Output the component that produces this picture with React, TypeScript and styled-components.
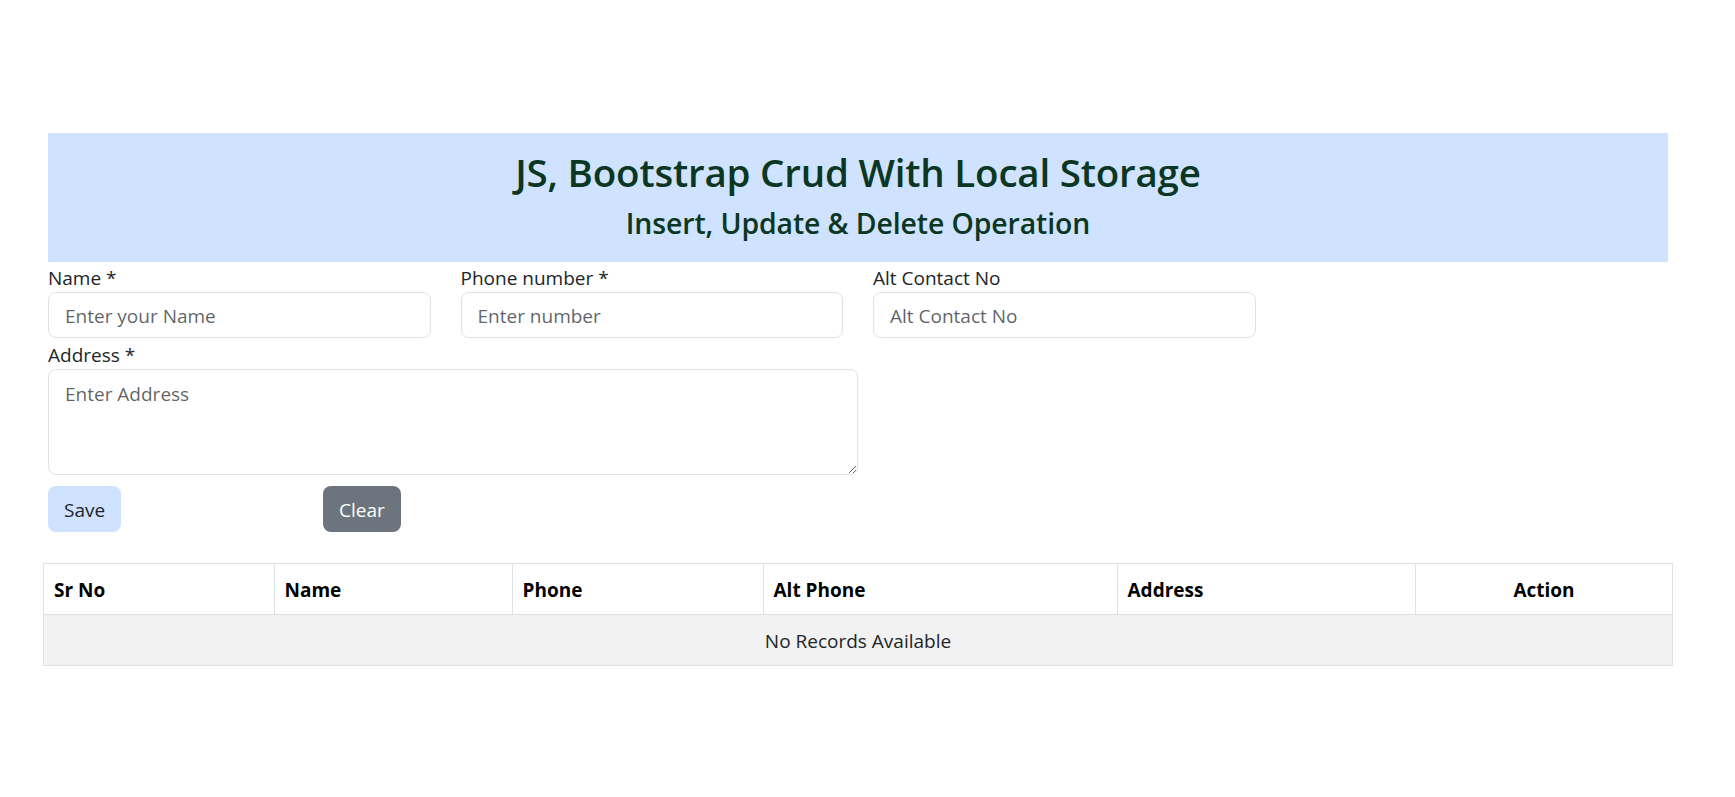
import React from "react";
import styled, { createGlobalStyle } from "styled-components";

const GlobalStyle = createGlobalStyle`
  html, body { margin: 0; padding: 0; background: #ffffff; }
  body {
    font-family: "Open Sans", "Noto Sans", "Liberation Sans", sans-serif;
    font-size: 19px;
    color: #212529;
  }
  *, *::before, *::after { box-sizing: border-box; }
`;

const Page = styled.main`
  padding: 133px 63px 40px 43px;
`;

const Banner = styled.header`
  margin: 0 4px 0 5px;
  height: 129px;
  background: #cfe2ff;
  color: #0a3622;
  display: flex;
  flex-direction: column;
  align-items: center;
  padding-top: 15px;
`;

const Title = styled.h1`
  margin: 0;
  font-size: 38.5px;
  font-weight: 600;
  line-height: 48px;
  letter-spacing: -0.2px;
`;

const Subtitle = styled.h3`
  margin: 7px 0 0;
  font-size: 28.4px;
  font-weight: 600;
  line-height: 40px;
  letter-spacing: -0.1px;
`;

const Form = styled.form`
  padding-left: 5px;
`;

const FieldRow = styled.div`
  display: grid;
  grid-template-columns: repeat(3, 382.5px);
  column-gap: 30px;
`;

const Field = styled.div<{ $width?: string }>`
  display: flex;
  flex-direction: column;
  width: ${(p) => p.$width ?? "auto"};
`;

const Label = styled.label`
  display: block;
  height: 30px;
  padding-top: 1px;
  line-height: 30px;
  font-size: 19px;
  color: #212529;
  white-space: nowrap;
  overflow: visible;
`;

const inputBase = `
  width: 100%;
  border: 1px solid #dee2e6;
  border-radius: 8px;
  background: #ffffff;
  font-family: "Open Sans", "Noto Sans", "Liberation Sans", sans-serif;
  font-size: 19px;
  color: #212529;
  padding: 0 16px;
  outline: none;
  &::placeholder { color: rgba(33, 37, 41, 0.72); }
`;

const Input = styled.input`
  ${inputBase}
  height: 46px;
  padding-top: 2px;
  display: block;
`;

const TextArea = styled.textarea`
  ${inputBase}
  height: 106px;
  display: block;
  padding-top: 10px;
  line-height: 28px;
  resize: vertical;
`;

const AddressBlock = styled.div`
  margin-top: 1px;
`;

const ButtonRow = styled.div`
  display: grid;
  grid-template-columns: 275px 275px;
  margin-top: 11px;
`;

const Button = styled.button<{ $variant: "light" | "secondary" }>`
  justify-self: start;
  height: 46px;
  padding: 2px 16px 0;
  border: none;
  border-radius: 8px;
  font-family: "Open Sans", "Noto Sans", "Liberation Sans", sans-serif;
  font-size: 19px;
  cursor: pointer;
  background: ${(p) => (p.$variant === "light" ? "#cfe2ff" : "#6c757d")};
  color: ${(p) => (p.$variant === "light" ? "#212529" : "#ffffff")};
`;

const Table = styled.table`
  margin-top: 31px;
  width: 1629px;
  border-collapse: collapse;
  table-layout: fixed;
  font-size: 19px;
`;

const HeadCell = styled.th<{ $align?: string }>`
  height: 51px;
  padding: 2px 10px 0;
  border: 1px solid #dee2e6;
  text-align: ${(p) => p.$align ?? "left"};
  font-weight: 700;
  color: #000000;
  background: #ffffff;
`;

const EmptyCell = styled.td`
  height: 51px;
  padding: 2px 10px 0;
  border: 1px solid #dee2e6;
  text-align: center;
  background: #f2f2f2;
  color: #212529;
`;

const columns = [
  { label: "Sr No", width: 230.5 },
  { label: "Name", width: 238 },
  { label: "Phone", width: 251 },
  { label: "Alt Phone", width: 354 },
  { label: "Address", width: 298.5 },
  { label: "Action", width: 257, align: "center" },
];

export default function App() {
  return (
    <>
      <GlobalStyle />
      <Page>
        <Banner>
          <Title>JS, Bootstrap Crud With Local Storage</Title>
          <Subtitle>Insert, Update &amp; Delete Operation</Subtitle>
        </Banner>
        <Form onSubmit={(e) => e.preventDefault()}>
          <FieldRow>
            <Field>
              <Label htmlFor="name">Name *</Label>
              <Input id="name" placeholder="Enter your Name" />
            </Field>
            <Field>
              <Label htmlFor="phone">Phone number *</Label>
              <Input id="phone" placeholder="Enter number" />
            </Field>
            <Field>
              <Label htmlFor="alt">Alt Contact No</Label>
              <Input id="alt" placeholder="Alt Contact No" />
            </Field>
          </FieldRow>
          <AddressBlock>
            <Field $width="810px">
              <Label htmlFor="address">Address *</Label>
              <TextArea id="address" placeholder="Enter Address" />
            </Field>
          </AddressBlock>
          <ButtonRow>
            <Button type="submit" $variant="light">Save</Button>
            <Button type="button" $variant="secondary">Clear</Button>
          </ButtonRow>
        </Form>
        <Table>
          <colgroup>
            {columns.map((c) => (
              <col key={c.label} style={{ width: `${c.width}px` }} />
            ))}
          </colgroup>
          <thead>
            <tr>
              {columns.map((c) => (
                <HeadCell key={c.label} $align={c.align}>
                  {c.label}
                </HeadCell>
              ))}
            </tr>
          </thead>
          <tbody>
            <tr>
              <EmptyCell colSpan={6}>No Records Available</EmptyCell>
            </tr>
          </tbody>
        </Table>
      </Page>
    </>
  );
}
